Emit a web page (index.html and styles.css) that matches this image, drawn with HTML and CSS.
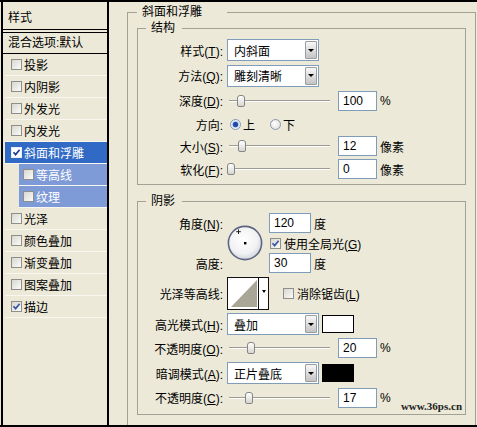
FILE: index.html
```html
<!DOCTYPE html>
<html lang="zh-CN">
  <head>
    <meta charset="UTF-8" />
    <meta name="viewport" content="width=device-width, initial-scale=1.0" />
    <title>图层样式</title>
    <link rel="stylesheet" href="styles.css">
  </head>
  <body>
    <div class="dialog">

      <!-- style list on the left -->
      <div class="styles-list">
        <div class="list-head">样式</div>
        <div class="list-blend">混合选项:默认</div>
        <div class="style-item"><span class="check"></span>投影</div>
        <div class="style-item"><span class="check"></span>内阴影</div>
        <div class="style-item"><span class="check"></span>外发光</div>
        <div class="style-item"><span class="check"></span>内发光</div>
        <div class="style-item selected">
          <span class="check white">
            <svg width="9" height="9" viewBox="0 0 9 9"><path d="M1.5 4.2 L3.6 6.6 L7.6 1.8" fill="none" stroke="#1d3f96" stroke-width="1.7"/></svg>
          </span>斜面和浮雕
        </div>
        <div class="style-item sub"><span class="check"></span>等高线</div>
        <div class="style-item sub"><span class="check"></span>纹理</div>
        <div class="style-item"><span class="check"></span>光泽</div>
        <div class="style-item"><span class="check"></span>颜色叠加</div>
        <div class="style-item"><span class="check"></span>渐变叠加</div>
        <div class="style-item"><span class="check"></span>图案叠加</div>
        <div class="style-item">
          <span class="check">
            <svg width="9" height="9" viewBox="0 0 9 9"><path d="M1.5 4.2 L3.6 6.6 L7.6 1.8" fill="none" stroke="#3a56a8" stroke-width="1.7"/></svg>
          </span>描边
        </div>
      </div>

      <!-- bevel and emboss settings -->
      <fieldset class="group bevel">
        <legend>斜面和浮雕</legend>

        <fieldset class="group structure">
          <legend>结构</legend>
          <div class="form structure-form">
            <label class="lbl">样式(<u>T</u>):</label>
            <div class="ctl">
              <div class="select"><span>内斜面</span><i class="drop"></i></div>
            </div>

            <label class="lbl">方法(<u>Q</u>):</label>
            <div class="ctl">
              <div class="select"><span>雕刻清晰</span><i class="drop"></i></div>
            </div>

            <label class="lbl">深度(<u>D</u>):</label>
            <div class="ctl">
              <div class="slider"><div class="track"></div><i class="thumb" style="left:10px"></i></div>
              <input class="num" type="text" value="100"><span class="unit">%</span>
            </div>

            <label class="lbl">方向:</label>
            <div class="ctl">
              <span class="radio on"></span><span class="radio-text">上</span>
              <span class="radio second"></span><span class="radio-text">下</span>
            </div>

            <label class="lbl">大小(<u>S</u>):</label>
            <div class="ctl">
              <div class="slider"><div class="track"></div><i class="thumb" style="left:11px"></i></div>
              <input class="num" type="text" value="12"><span class="unit">像素</span>
            </div>

            <label class="lbl">软化(<u>F</u>):</label>
            <div class="ctl">
              <div class="slider"><div class="track"></div><i class="thumb" style="left:0px"></i></div>
              <input class="num" type="text" value="0"><span class="unit">像素</span>
            </div>
          </div>
        </fieldset>

        <fieldset class="group shadow">
          <legend>阴影</legend>
          <div class="form shadow-form">
            <label class="lbl">角度(<u>N</u>):</label>
            <div class="dial">
              <svg width="36" height="36" viewBox="0 0 36 36">
                <defs>
                  <radialGradient id="dialFill" cx="45%" cy="40%" r="60%">
                    <stop offset="0" stop-color="#ffffff"/>
                    <stop offset="0.7" stop-color="#f2f2f4"/>
                    <stop offset="1" stop-color="#d3d6df"/>
                  </radialGradient>
                </defs>
                <circle cx="18" cy="18" r="16.6" fill="url(#dialFill)" stroke="#5d6680" stroke-width="1.6"/>
                <path d="M11.5 4.5 V9 M9.2 6.7 H13.8" stroke="#222" stroke-width="1"/>
                <rect x="17" y="17" width="2.4" height="2.4" fill="#000"/>
              </svg>
            </div>
            <div class="ctl">
              <input class="num wide" type="text" value="120"><span class="unit">度</span>
            </div>

            <div class="ctl global">
              <span class="check">
                <svg width="9" height="9" viewBox="0 0 9 9"><path d="M1.5 4.2 L3.6 6.6 L7.6 1.8" fill="none" stroke="#3a56a8" stroke-width="1.7"/></svg>
              </span>
              <span class="check-text">使用全局光(<u>G</u>)</span>
            </div>

            <label class="lbl">高度:</label>
            <div class="ctl">
              <input class="num wide" type="text" value="30"><span class="unit">度</span>
            </div>

            <label class="lbl">光泽等高线:</label>
            <div class="ctl span">
              <div class="contour">
                <svg width="30" height="31" viewBox="0 0 30 31"><polygon points="3,29 29,2 29,29" fill="#aaa697"/></svg>
                <div class="contour-drop"><i></i></div>
              </div>
              <span class="check antialias"></span>
              <span class="check-text">消除锯齿(<u>L</u>)</span>
            </div>

            <label class="lbl">高光模式(<u>H</u>):</label>
            <div class="ctl span">
              <div class="select"><span>叠加</span><i class="drop"></i></div>
              <span class="swatch light"></span>
            </div>

            <label class="lbl">不透明度(<u>O</u>):</label>
            <div class="ctl span">
              <div class="slider"><div class="track"></div><i class="thumb" style="left:20px"></i></div>
              <input class="num" type="text" value="20"><span class="unit">%</span>
            </div>

            <label class="lbl">暗调模式(<u>A</u>):</label>
            <div class="ctl span">
              <div class="select"><span>正片叠底</span><i class="drop"></i></div>
              <span class="swatch dark"></span>
            </div>

            <label class="lbl">不透明度(<u>C</u>):</label>
            <div class="ctl span">
              <div class="slider"><div class="track"></div><i class="thumb" style="left:18px"></i></div>
              <input class="num" type="text" value="17"><span class="unit">%</span>
              <span class="mark">www.36ps.cn</span>
            </div>
          </div>
        </fieldset>
      </fieldset>
    </div>
  </body>
</html>
```

FILE: styles.css
```css
body{
  margin: 0;
  background-color: #ece9d8;
  color: #000;
  font-family: "Liberation Sans", "Noto Sans CJK SC", sans-serif;
  font-size: 12px;
}
u{
  text-underline-offset: 1px;
}
.dialog{
  width: 477px;
  height: 427px;
  box-sizing: border-box;
  border-top: 2px solid #000;
  border-bottom: 2px solid #000;
  display: flex;
}

/* left list */
.styles-list{
  width: 108px;
  box-sizing: border-box;
  margin-left: 1px;
  border-left: 2px solid #000;
  border-right: 2px solid #000;
}
.list-head{
  height: 28px;
  box-sizing: border-box;
  padding: 9px 0 0 5px;
  line-height: 14px;
  border-bottom: 1px solid #000;
}
.list-blend{
  margin-top: 2px;
  height: 22px;
  box-sizing: border-box;
  padding-left: 5px;
  line-height: 20px;
  border-top: 1px solid #000;
  border-bottom: 1px solid #000;
}
.style-item{
  height: 22px;
  box-sizing: border-box;
  margin-left: 2px;
  padding-left: 6px;
  display: flex;
  align-items: center;
  border-bottom: 1px solid #f8f7f0;
}
.style-item .check{
  margin-right: 2px;
}
.selected{
  background-color: #316ac5;
  color: white;
}
.sub{
  margin-left: 16px;
  padding-left: 4px;
  background-color: #7e9bd7;
  color: white;
}

/* checkboxes and radios */
.check{
  width: 11px;
  height: 11px;
  box-sizing: border-box;
  border: 1px solid #8e8e8a;
  background: linear-gradient(135deg, #d8d7d0, #fbfbf8);
  display: flex;
  align-items: center;
  justify-content: center;
  flex-shrink: 0;
}
.check.white{
  background: #fff;
  border-color: #e6ebf6;
}
.check-text{
  margin-left: 3px;
  white-space: nowrap;
}
.radio{
  width: 11px;
  height: 11px;
  box-sizing: border-box;
  border-radius: 50%;
  border: 1px solid #8a98b2;
  background: radial-gradient(circle at 40% 40%, #fff, #d9d9d2);
  margin-left: 3px;
}
.radio.on{
  background: radial-gradient(circle, #1f3f8e 0, #2a55b0 2.4px, #cbdcf5 3.2px, #fff 5px);
}
.radio.second{
  margin-left: 15px;
}
.radio-text{
  margin-left: 2px;
}

/* group boxes */
.group{
  margin: 0;
  padding: 0;
  min-width: 0;
  border: 1px solid #a3a195;
}
.group legend{
  margin-left: 8px;
  padding: 0 7px 0 5px;
  line-height: 14px;
}
.bevel{
  margin: 3px 0 0 18px;
  width: 349px;
  box-sizing: border-box;
  border-bottom: none;
  padding: 2px 9px 0 9px;
}
.bevel > legend{
  margin-left: 0;
  padding: 0 25px 0 5px;
}
.structure{
  padding: 2px 0 3px;
}
.shadow{
  margin-top: 9px;
  padding: 5px 0 4px;
}

/* rows */
.form{
  display: grid;
  grid-template-columns: 89px auto;
  align-items: center;
}
.structure-form{
  grid-template-rows: 26px 25px 25px 22px 22px 24px;
}
.shadow-form{
  grid-template-columns: 89px 42px auto;
  grid-template-rows: 20px 20px 20px 40px 22px 26px 24px 25px;
}
.lbl{
  text-align: right;
  padding-right: 4px;
  white-space: nowrap;
}
.ctl{
  display: flex;
  align-items: center;
}
.span{
  grid-column: 2 / -1;
}
.global{
  grid-column: 3;
  padding-left: 1px;
}
.dial{
  grid-column: 2;
  grid-row: 1 / 4;
  display: flex;
}
.dial svg{
  display: block;
}

/* select boxes */
.select{
  width: 92px;
  height: 22px;
  box-sizing: border-box;
  border: 1px solid #7f9db9;
  background-color: #fff;
  padding: 1px;
  display: flex;
  align-items: center;
}
.select span{
  flex: 1;
  padding-left: 5px;
}
.drop{
  width: 12px;
  height: 18px;
  box-sizing: border-box;
  border: 1px solid #9c9c9c;
  border-radius: 1px;
  background: linear-gradient(#f8f8f8, #c4c4c4);
  display: flex;
  align-items: center;
  justify-content: center;
}
.drop::after{
  content: "";
  border-left: 3px solid transparent;
  border-right: 3px solid transparent;
  border-top: 3px solid #000;
}

/* sliders and number boxes */
.slider{
  position: relative;
  width: 103px;
  height: 20px;
  margin-right: 8px;
  display: flex;
  align-items: center;
}
.track{
  flex: 1;
  margin-left: 2px;
  height: 1px;
  background-color: #9e9c92;
  border-bottom: 1px solid #fff;
}
.thumb{
  position: absolute;
  top: 4px;
  width: 8px;
  height: 12px;
  box-sizing: border-box;
  border: 1px solid #858585;
  border-radius: 3px 3px 2px 2px;
  background: linear-gradient(#fff, #d6d6d0);
}
.num{
  width: 39px;
  height: 20px;
  box-sizing: border-box;
  margin: 0;
  border: 1px solid #7f9db9;
  background-color: #fff;
  padding: 0 0 0 4px;
  font: inherit;
  color: #000;
}
.num.wide{
  width: 42px;
}
.unit{
  margin-left: 3px;
}

/* contour picker */
.contour{
  width: 42px;
  height: 33px;
  box-sizing: border-box;
  border: 1px solid #111;
  background-color: #fff;
  display: flex;
}
.contour svg{
  display: block;
}
.contour-drop{
  width: 9px;
  border-left: 1px solid #111;
  display: flex;
  justify-content: center;
  padding-top: 12px;
}
.contour-drop i{
  width: 0;
  height: 0;
  border-left: 2.5px solid transparent;
  border-right: 2.5px solid transparent;
  border-top: 3px solid #000;
}
.antialias{
  margin-left: 14px;
}

/* colour swatches */
.swatch{
  width: 32px;
  height: 18px;
  box-sizing: border-box;
  margin-left: 3px;
  border: 1px solid #000;
}
.light{
  background-color: #fff;
}
.dark{
  background-color: #000;
}

.mark{
  margin-left: auto;
  margin-right: 3px;
  align-self: flex-end;
  margin-bottom: -4px;
  font-family: "Liberation Serif", serif;
  font-weight: bold;
  font-size: 11px;
  line-height: 12px;
  color: #222;
}
```
